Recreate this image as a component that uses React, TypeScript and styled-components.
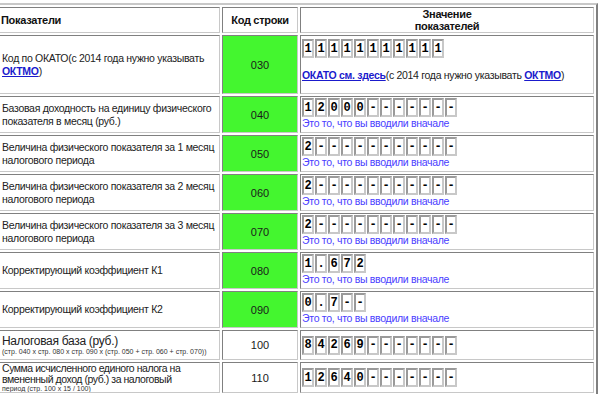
import React from 'react';
import styled, {createGlobalStyle} from 'styled-components';

const GlobalStyle = createGlobalStyle`
  html, body {
    margin: 0;
    padding: 0;
    background: #fff;
    overflow: hidden;
  }
  body {
    font-family: "Liberation Sans", Arial, sans-serif;
  }
`;

type Row = {
  label: string;
  code: string;
  digits: string;
};

const rows: Row[] = [
  {label: 'Базовая доходность на единицу физического показателя в месяц (руб.)', code: '040', digits: '12000-------'},
  {label: 'Величина физического показателя за 1 месяц налогового периода', code: '050', digits: '2-----------'},
  {label: 'Величина физического показателя за 2 месяц налогового периода', code: '060', digits: '2-----------'},
  {label: 'Величина физического показателя за 3 месяц налогового периода', code: '070', digits: '2-----------'},
  {label: 'Корректирующий коэффициент К1', code: '080', digits: '1.672'},
  {label: 'Корректирующий коэффициент К2', code: '090', digits: '0.7--'},
];

function Digits({value}: {value: string}) {
  return (
    <DigitRow>
      {value.split('').map((ch, i) => (
        <Digit key={i}>{ch}</Digit>
      ))}
    </DigitRow>
  );
}

export default function App() {
  return (
    <>
      <GlobalStyle/>
      <Table>
        <thead>
          <tr>
            <HeadCell $w={222} $align="left">Показатели</HeadCell>
            <HeadCell $w={76}>Код строки</HeadCell>
            <HeadCell>Значение<br/>показателей</HeadCell>
          </tr>
        </thead>
        <tbody>
          {/* ОКАТО */}
          <tr>
            <LabelCell $h={59}>
              Код по ОКАТО(с 2014 года нужно указывать <Link>ОКТМО</Link>)
            </LabelCell>
            <CodeCell $green>030</CodeCell>
            <ValueCell $pt={3}>
              <Digits value="11111111111"/>
              <LinkLine>
                <Link>ОКАТО см. здесь</Link>(с 2014 года нужно указывать <Link>ОКТМО</Link>)
              </LinkLine>
            </ValueCell>
          </tr>

          {rows.map(r => (
            <tr key={r.code}>
              <LabelCell $h={37}>{r.label}</LabelCell>
              <CodeCell $green>{r.code}</CodeCell>
              <ValueCell>
                <Digits value={r.digits}/>
                <Note>Это то, что вы вводили вначале</Note>
              </ValueCell>
            </tr>
          ))}

          <tr>
            <LabelCell $h={30} $size={12} $lh={13}>
              Налоговая база (руб.)
              <Small>(стр. 040 x стр. 080 x стр. 090 x (стр. 050 + стр. 060 + стр. 070))</Small>
            </LabelCell>
            <CodeCell>100</CodeCell>
            <ValueCell $middle>
              <Digits value="84269-------"/>
            </ValueCell>
          </tr>
          <tr>
            <LabelCell $h={30} $size={10.5} $lh={11} $ls={-0.45}>
              Сумма исчисленного единого налога на вмененный доход (руб.) за налоговый
              <Small>период (стр. 100 x 15 / 100)</Small>
            </LabelCell>
            <CodeCell>110</CodeCell>
            <ValueCell $middle>
              <Digits value="12640-------"/>
            </ValueCell>
          </tr>
        </tbody>
      </Table>
    </>
  );
}

const Table = styled.table`
  margin: 3px 0 0 -6px;
  width: 604px;
  table-layout: fixed;
  border-collapse: separate;
  border-spacing: 2px;
  border: 2px solid;
  border-color: #c8c8c8 #808080 #808080 #c8c8c8;
  font-size: 10.5px;
  letter-spacing: -0.3px;
  color: #1a1a1a;

  td, th {
    box-sizing: border-box;
    border: 1px solid;
    border-color: #808080 #c8c8c8 #c8c8c8 #808080;
  }
`;

const HeadCell = styled.th<{ $w?: number; $align?: string }>`
  ${p => p.$w ? `width: ${p.$w}px;` : ''}
  height: 26px;
  padding: 0 2px;
  font-weight: bold;
  font-size: 11px;
  line-height: 12px;
  letter-spacing: -0.3px;
  text-align: ${p => p.$align || 'center'};
  color: #111;
`;

const LabelCell = styled.td<{ $h: number; $size?: number; $lh?: number; $ls?: number }>`
  height: ${p => p.$h}px;
  padding: 0 1px 0 3px;
  font-size: ${p => p.$size ?? 10.5}px;
  line-height: ${p => p.$lh ?? 13}px;
  letter-spacing: ${p => p.$ls ?? -0.3}px;
  vertical-align: middle;
  color: #222;
  overflow: hidden;
`;

const Small = styled.div`
  font-size: 7px;
  line-height: 7px;
  letter-spacing: 0;
  color: #333;
`;

const CodeCell = styled.td<{ $green?: boolean }>`
  padding: 0;
  text-align: center;
  vertical-align: middle;
  font-size: 11px;
  letter-spacing: 0;
  background: ${p => p.$green ? '#44f62f' : '#fff'};
  color: #1a1a1a;
`;

const ValueCell = styled.td<{ $middle?: boolean; $pt?: number }>`
  padding: ${p => p.$pt ?? 1}px 1px 1px;
  vertical-align: ${p => p.$middle ? 'middle' : 'top'};
`;

const DigitRow = styled.div`
  display: flex;
  gap: 1px;
`;

const Digit = styled.span`
  box-sizing: border-box;
  width: 12px;
  height: 19px;
  display: flex;
  align-items: center;
  justify-content: center;
  border: 2px solid;
  border-color: #9a9a9a #c8c8c8 #c8c8c8 #9a9a9a;
  background: #fff;
  font-family: "Liberation Mono", "Courier New", monospace;
  font-weight: bold;
  font-size: 12px;
  letter-spacing: 0;
  color: #000;
`;

const Note = styled.div`
  font-size: 10.5px;
  line-height: 12px;
  color: #4a3dff;
`;

const LinkLine = styled.div`
  margin-top: 11px;
  font-size: 10.5px;
  line-height: 13px;
  color: #222;
`;

const Link = styled.a`
  color: #1a1acc;
  font-weight: bold;
  text-decoration: underline;
  cursor: pointer;
`;
